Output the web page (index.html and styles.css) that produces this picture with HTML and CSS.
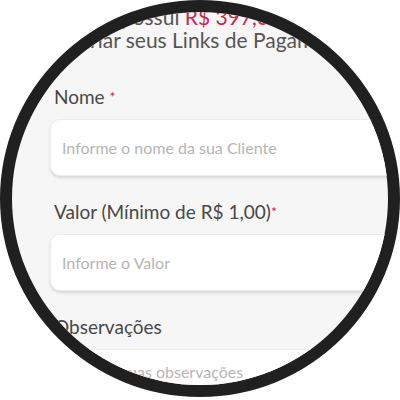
FILE: index.html
```html
<!DOCTYPE html>
<html lang="pt-BR">
  <head>
    <meta charset="UTF-8" />
    <meta name="viewport" content="width=device-width, initial-scale=1.0" />
    <title>Link de Pagamento</title>
    <link rel="stylesheet" href="styles.css">
  </head>
  <body>
    <div class="lens">
      <div class="page">
        <p class="intro">
          <span class="line">Você possui <span class="money">R$ 397,00</span> disponíveis para</span>
          <span class="line line-2">criar seus Links de Pagamento</span>
        </p>

        <form class="form">
          <div class="field">
            <label for="nome">Nome <span class="req">*</span></label>
            <input type="text" id="nome" placeholder="Informe o nome da sua Cliente" />
          </div>
          <div class="field">
            <label for="valor">Valor (Mínimo de R$ 1,00)<span class="req">*</span></label>
            <input type="text" id="valor" placeholder="Informe o Valor" />
          </div>
          <div class="field">
            <label for="obs">Observações</label>
            <textarea id="obs" rows="3" placeholder="Informe suas observações"></textarea>
          </div>
        </form>
      </div>
    </div>
  </body>
</html>
```

FILE: styles.css
```css
:root {
  --bg-color: #f6f6f6;
  --ring-color: #202020;
  --text-color: #484848;
  --muted-color: #b5b5b5;
  --accent-color: #c8284c;
}
* {
  box-sizing: border-box;
}
body {
  margin: 0;
  background: #ffffff;
  font-family: Lato, "Open Sans", sans-serif;
  color: var(--text-color);
}
.lens {
  width: 400px;
  height: 397px;
  border: 12px solid var(--ring-color);
  border-radius: 50%;
  overflow: hidden;
  background: var(--bg-color);
}
.page {
  padding: 0 0 0 38px;
}
.intro {
  margin: -7px 0 0 20px;
  font-size: 21px;
  line-height: 23px;
  color: #555555;
  white-space: nowrap;
}
.line {
  display: block;
}
.line-2 {
  padding-left: 10px;
}
.money {
  color: var(--accent-color);
}
.form {
  margin-top: 35px;
  display: flex;
  flex-direction: column;
  gap: 25px;
}
.field {
  display: flex;
  flex-direction: column;
  gap: 11px;
}
label {
  padding-left: 4px;
  font-size: 19px;
  line-height: 22px;
  color: var(--text-color);
}
.req {
  color: var(--accent-color);
  font-size: 14px;
  vertical-align: top;
}
input,
textarea {
  width: 380px;
  height: 57px;
  padding: 0 11px;
  border: 1px solid #ececec;
  border-radius: 10px;
  background: #ffffff;
  box-shadow: 0 2px 3px rgba(0, 0, 0, 0.12);
  font-family: inherit;
  font-size: 16px;
  color: var(--text-color);
  outline: none;
}
textarea {
  height: 90px;
  padding-top: 12px;
  resize: none;
}
input::placeholder,
textarea::placeholder {
  color: var(--muted-color);
}
```
